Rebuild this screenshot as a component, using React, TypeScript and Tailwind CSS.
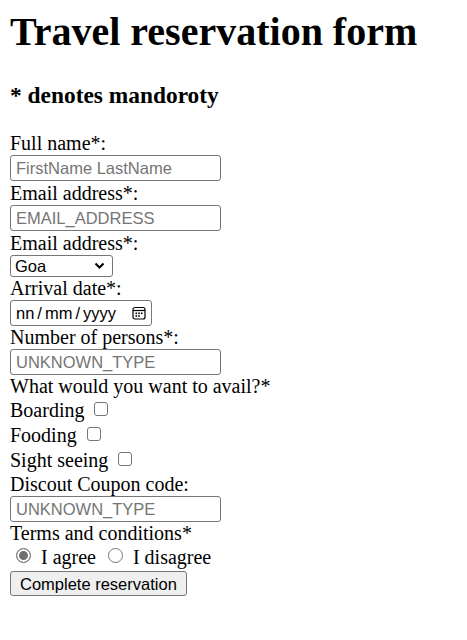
import { useState } from "react";

const serif = "font-['Liberation_Serif','Times_New_Roman',serif]";
const sans = "font-['Liberation_Sans',Arial,sans-serif]";

const textField =
  "block h-[26px] w-[211px] rounded-[3px] border border-[#767676] bg-white pl-[5px] text-[16.5px] text-black outline-none placeholder:text-[#757575] " + sans;

const radioCls =
  "mr-[10px] mt-[3px] h-[15px] w-[15px] appearance-none rounded-full border border-[#767676] bg-white checked:bg-[#6f6f6f] checked:shadow-[inset_0_0_0_2px_white]";

function Label({ children }: { children: React.ReactNode }) {
  return <div className="h-[23px] text-[20px] leading-[23px] text-black">{children}</div>;
}

function CheckRow({ label }: { label: string }) {
  return (
    <label className="flex h-[25px] items-start text-[20px] leading-[25px]">
      <span>{label}</span>
      <input
        type="checkbox"
        className="ml-[10px] mt-[4px] h-[14px] w-[14px] appearance-none rounded-[3px] border border-[#767676] bg-white checked:bg-[#767676]"
      />
    </label>
  );
}

export default function App() {
  const [terms, setTerms] = useState("agree");

  return (
    <main className={`min-h-[640px] bg-white px-[10px] text-black ${serif}`}>
      <h1 className="pt-[9px] text-[40px] font-bold leading-[46px]">Travel reservation form</h1>
      <h3 className="mb-[23px] mt-[27px] text-[23.4px] font-bold leading-[27px]">* denotes mandoroty</h3>

      <form onSubmit={(e) => e.preventDefault()}>
        <Label>Full name*:</Label>
        <div className="h-[27px]">
          <input type="text" placeholder="FirstName LastName" className={textField} />
        </div>

        <Label>Email address*:</Label>
        <div className="h-[27px]">
          <input type="text" placeholder="EMAIL_ADDRESS" className={textField} />
        </div>

        <Label>Email address*:</Label>
        <div className="h-[22px]">
          <div className="relative w-[103px]">
            <select
              defaultValue="Goa"
              className={`block h-[22px] w-[103px] appearance-none rounded-[3px] border border-[#767676] bg-white pl-[4px] text-[16.5px] leading-[20px] text-black outline-none ${sans}`}
            >
              <option>Goa</option>
              <option>Kerala</option>
              <option>Manali</option>
            </select>
            <svg
              className="pointer-events-none absolute right-[8px] top-[7px]"
              width="11"
              height="8"
              viewBox="0 0 11 8"
              fill="none"
            >
              <path d="M1.5 1.5 L5.5 5.5 L9.5 1.5" stroke="#000" strokeWidth="2" />
            </svg>
          </div>
        </div>

        <Label>Arrival date*:</Label>
        <div className="h-[26px]">
          <div
            className={`flex h-[26px] w-[142px] items-center rounded-[3px] border border-[#767676] bg-white pl-[5px] pr-[5px] text-[16.5px] text-black ${sans}`}
          >
            <span>nn</span>
            <span className="mx-[3px]">/</span>
            <span>mm</span>
            <span className="mx-[3px]">/</span>
            <span>yyyy</span>
            <svg className="ml-auto" width="14" height="14" viewBox="0 0 14 14" fill="none">
              <rect x="1" y="1.5" width="12" height="11.5" rx="2" stroke="#000" strokeWidth="1.2" />
              <line x1="1" y1="4.5" x2="13" y2="4.5" stroke="#000" strokeWidth="1.2" />
              <rect x="3.5" y="6.5" width="1.6" height="1.6" fill="#000" />
              <rect x="6.2" y="6.5" width="1.6" height="1.6" fill="#000" />
              <rect x="8.9" y="6.5" width="1.6" height="1.6" fill="#000" />
              <rect x="3.5" y="9.2" width="1.6" height="1.6" fill="#000" />
              <rect x="6.2" y="9.2" width="1.6" height="1.6" fill="#000" />
            </svg>
          </div>
        </div>

        <Label>Number of persons*:</Label>
        <div className="h-[26px]">
          <input type="text" placeholder="UNKNOWN_TYPE" className={textField} />
        </div>

        <Label>What would you want to avail?*</Label>
        <CheckRow label="Boarding" />
        <CheckRow label="Fooding" />
        <CheckRow label="Sight seeing" />

        <Label>Discout Coupon code:</Label>
        <div className="h-[26px]">
          <input type="text" placeholder="UNKNOWN_TYPE" className={textField} />
        </div>

        <Label>Terms and conditions*</Label>
        <div className="flex h-[25px] items-start pl-[6px] text-[20px] leading-[25px]">
          <label className="flex items-start">
            <input
              type="radio"
              name="terms"
              checked={terms === "agree"}
              onChange={() => setTerms("agree")}
              className={radioCls}
            />
            <span>I agree</span>
          </label>
          <label className="ml-[12px] flex items-start">
            <input
              type="radio"
              name="terms"
              checked={terms === "disagree"}
              onChange={() => setTerms("disagree")}
              className={radioCls}
            />
            <span>I disagree</span>
          </label>
        </div>

        <button
          type="submit"
          className={`mt-[1px] h-[25px] rounded-[3px] border border-[#767676] bg-[#efefef] px-[9px] text-[16.5px] leading-[20px] text-black ${sans}`}
        >
          Complete reservation
        </button>
      </form>
    </main>
  );
}
